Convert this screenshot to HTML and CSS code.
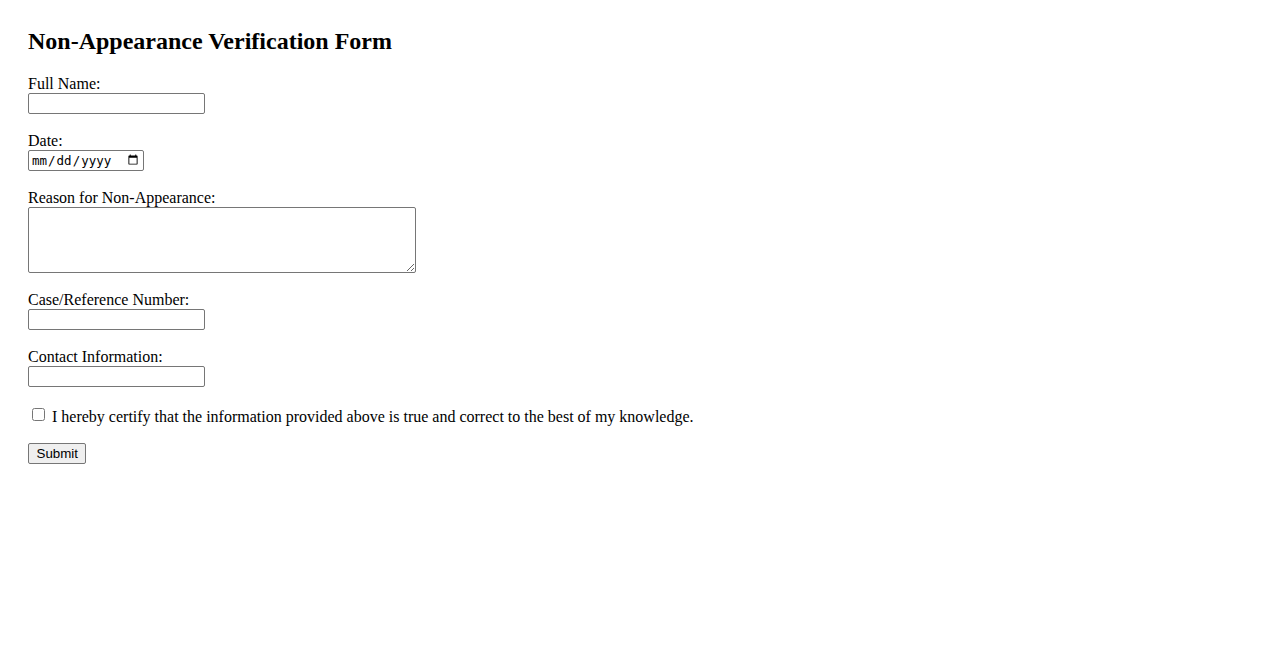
FILE: index.html
```html
<!DOCTYPE html>
<html lang="en">
<head>
    <meta charset="UTF-8">
    <meta name="viewport" content="width=device-width, initial-scale=1.0">
    <title>Non-Appearance Verification Form</title>
    <link rel="stylesheet" href="styles.css">
</head>
<body>
    <h2>Non-Appearance Verification Form</h2>
    <form class="form" onsubmit="return false;">
        <div class="field">
            <label for="fullName">Full Name:</label>
            <input type="text" id="fullName" name="fullName" class="text-input">
        </div>
        <div class="field">
            <label for="date">Date:</label>
            <input type="date" id="date" name="date" class="date-input">
        </div>
        <div class="field">
            <label for="reason">Reason for Non-Appearance:</label>
            <textarea id="reason" name="reason" rows="4" cols="50"></textarea>
        </div>
        <div class="field">
            <label for="caseNumber">Case/Reference Number:</label>
            <input type="text" id="caseNumber" name="caseNumber" class="text-input">
        </div>
        <div class="field">
            <label for="contact">Contact Information:</label>
            <input type="text" id="contact" name="contact" class="text-input">
        </div>
        <div class="certify">
            <input type="checkbox" id="certify" name="certify"> <label for="certify">I hereby certify that the information provided above is true and correct to the best of my knowledge.</label>
        </div>
        <button type="submit" class="submit">Submit</button>
    </form>
</body>
</html>
```

FILE: styles.css
```css
body{
    font-family: "Liberation Serif", "Times New Roman", serif;
    font-size: 16px;
    color: #000;
    background: #fff;
    margin: 0;
    padding: 28px;
}
h2{
    font-size: 24px;
    margin: 0 0 19px;
    line-height: 27.6px;
}
.field{
    display: flex;
    flex-direction: column;
    align-items: flex-start;
    margin-bottom: 18px;
}
.field label{
    line-height: 18px;
}
.text-input, .date-input, textarea{
    box-sizing: border-box;
    margin: 0;
    border: 1px solid #767676;
    border-radius: 2px;
    background: #fff;
}
.text-input{
    width: 177px;
    height: 21px;
    padding: 1px 2px;
    font-family: "Liberation Sans", Arial, sans-serif;
    font-size: 13.33px;
}
.date-input{
    width: 116px;
    height: 21px;
    padding: 1px 2px;
    font-family: "DejaVu Sans Mono", monospace;
    font-size: 12.5px;
}
textarea{
    width: 388px;
    height: 66px;
    padding: 2px;
    font-family: "Liberation Mono", monospace;
    font-size: 13.33px;
}
.certify{
    line-height: 18px;
    padding-top: 3px;
    margin-bottom: 17px;
}
.certify input{
    width: 13px;
    height: 13px;
    margin: 0 3px 0 4px;
    vertical-align: 1px;
}
.submit{
    font-family: "Liberation Sans", Arial, sans-serif;
    font-size: 13.33px;
    height: 21px;
    padding: 1px 7.5px;
    border: 1px solid #767676;
    border-radius: 2px;
    background: #efefef;
    color: #000;
}
```
